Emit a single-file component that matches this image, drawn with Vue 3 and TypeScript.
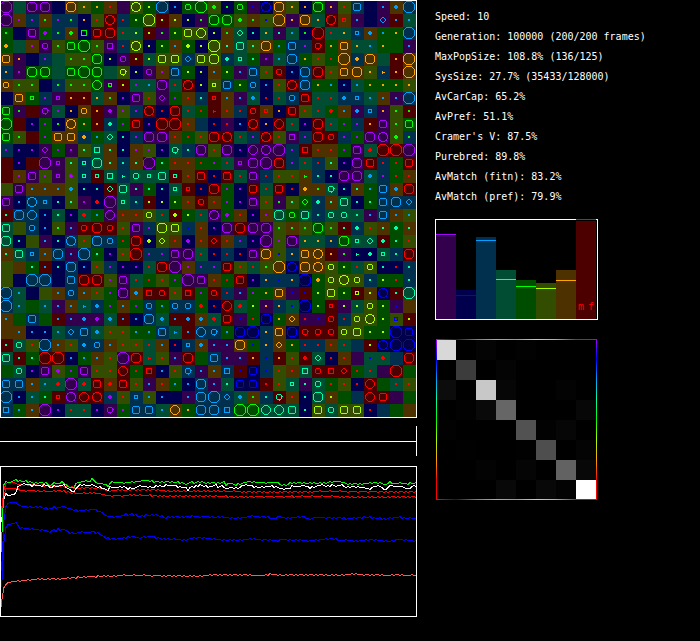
<script setup lang="ts">
type Point = [number, number]

interface Cell {
  x: number
  y: number
  fill: string
  stroke: string
  shape: string
}

const hues = ['#aa00ff', '#0000ff', '#00a0ff', '#00ffaa', '#00ff00', '#aaff00', '#ffa500', '#ff0000']
const shades = ['#33004d', '#00004d', '#00304d', '#004d33', '#004d00', '#334d00', '#4d3200', '#4d0000']

// One entry per cell: background index, marker index, marker shape.
const world = [
  '00O 3-- 00C 00C 1-- 66C 56. 46. 67. 0-- 55G 45. 22O 12. 44c 44O 54a 14. 44c 01. 11G 66C 56. 16. 44C 06. 57. 22m 1-- 02. 62a 22O',
  '00O 60. 20. 64. 20. 24. 16. 57. 77G 27. 45. 55O 75. 65. 15. 04. 44C 44C 54a 64. 51. 66O 06. 66C 36. 77G 67s 02. 1-- 02d 72. 32.',
  '44. 1-- 00m 40a 24. 64a 14q 77m 77C 37. 35. 75. 04. 45. 55m 55D 15. 64. 33d 13. 36. 03. 32. 14. 77O 37. 36. 22s 62a 42. 46. 22O',
  '46a 3-- 60. 00c 54. 44m 44O 54. 00q 27. 55G 15. 45. 62. 45a 15. 55O 63. 33m 53. 66C 42. 22m 20. 77g 46. 66m 36. 32. 46. 4-- 02.',
  '66m 06. 1-- 20. 3-- 54. 54. 44C 15. 00c 75. 35. 55m 55m 22d 55m 55C 23a 33s 43. 00. 32. 22C 46. 57. 47. 66O 26a 66C 3-- 76. 66O',
  '26. 00. 44C 44C 3-- 44m 44O 44C 3-- 55g 15. 00c 60. 22m 45. 15. 62. 45. 02. 22m 57. 77c 12. 22C 77C 57. 66m 66C 56. 26+ 76. 66O',
  '66c 54. 54. 1-- 24. 54. 54. 44D 04s 75. 30. 32. 00C 37. 77G 15. 55s 22m 45. 22c 12. 57. 77G 22C 46. 42. 12. 32. 46. 46. 46. 56.',
  '1-- 66m 44s 20. 00s 76. 76. 36. 64. 10. 00m 57. 00d 40. 67. 23. 77s 62. 02. 32a 17. 37. 22c 77m 37. 37. 22a 22s 32. 62. 02. 22O',
  '44m 04. 7-- 00g 30. 16. 66c 76. 00a 50. 20. 77G 17. 77C 37. 47. 77+ 67. 27. 77c 67s 16. 77m 57. 37. 47a 62. 02a 22s 06. 54. 74.',
  '44O 7-- 10. 40. 14. 66G 46. 76. 23a 40. 77m 10. 77O 77O 67. 2-- 17. 07. 12. 77G 16. 77D 37. 10. 77C 37. 40. 20. 76. 00m 54. 44m',
  '44m 54. 7-- 40. 66m 66m 26a 42. 33d 13. 20. 00C 00C 67. 47. 57. 77C 77G 37. 20. 77G 57. 00q 20. 77C 77c 20. 40. 00C 00G 54a 24.',
  '20. 10. 10. 00d 40. 00. 53. 33q 63. 13. 60. 50. 10. 33g 23. 00C 57. 00C 10. 00D 00G 00O 20. 77q 67. 67. 40. 00m 37a 77O 77O 00O',
  '7-- 10. 7-- 00O 00s 53. 23s 33C 63. 23. 63. 00O 43. 67. 67. 47. 40. 37. 00s 00C 00O 77C 20. 37. 27. 53. 10. 00C 77m 27. 47. 77m',
  '7-- 60. 00m 50. 00s 50a 23s 73s 33q 23+ 33c 33s 33m 73s 67. 77m 17. 77m 37. 00m 27. 57. 57. 64+ 23. 13. 00C 00C 32a 20. 47. 67.',
  '5-- 00m 62. 62. 62. 52a 13. 13. 73d 33m 03. 43. 13. 33s 77s 17. 77C 40. 10. 77m 37. 77m 17. 66a 64. 33g 13. 63. 42. 22m 62a 77C',
  '00m 12. 22G 22s 13. 53. 00. 17a 00O 33s 23. 75. 15. 45. 67. 77c 67. 40. 10. 00m 57. 04. 53. 44d 23a 63. 33m 13. 43. 22m 22C 22d',
  '73. 22C 22D 12. 33. 10. 37a 42. 00D 67. 67. 55c 37. 75a 45. 37. 00G 40a 67. 10. 60. 33C 44c 33m 23. 33c 33c 33. 02. 22m 62. 52.',
  '33m 5-- 22c 12. 54. 02. 77c 77C 77c 57. 00m 20. 55C 55m 21. 67. 10. 00C 77C 00C 00C 54. 64. 54. 44C 54. 73. 23a 57. 63. 43a 63.',
  '33C 13. 5-- 02. 13. 22G 57. 22C 22c 47. 77C 15a 55d 67. 10a 67. 77d 67. 20. 10. 00O 50. 00C 36. 36. 26. 44C 33s 33d 73a 43. 57.',
  '63. 33m 22s 62. 22C 02. 22O 43. 10. 57. 77O 20. 20. 00m 00C 37. 17. 27. 17. 00m 66C 51. 26. 66m 66G 76. 04. 13+ 13a 33s 23. 77C',
  '5-- 6-- 43. 72. 13. 22C 12. 57. 20. 10. 10. 37. 77C 00O 60. 20. 20. 77m 57. 37. 54. 66O 11G 66C 66G 55c 45. 37. 55c 13. 17. 23.',
  '5-- 1-- 22O 22O 1-- 22m 77C 77C 50. 00m 37. 47. 57. 40. 00O 00m 67. 47. 77m 10. 26. 21. 26. 11O 46a 55c 55G 55c 23. 45. 47. 23.',
  '22O 32. 1-- 5-- 62. 22c 62. 57. 40. 00C 62a 77q 77c 57. 77q 40. 77c 27. 02. 40. 46. 66m 01. 71. 45. 55m 45. 75s 65. 11G 73. 33O',
  '22O 32. 4-- 32. 02. 62. 32+ 22a 40. 62. 40. 22c 42. 22c 22c 47a 17. 77D 37a 45. 06. 26. 31. 11O 45. 77s 05. 35. 55c 45. 01. 6--',
  '62. 4-- 22m 4-- 72. 02. 02a 00a 32a 72. 12. 22C 32a 72. 72a 62a 37a 77m 01. 47. 11C 46. 66d 07. 01. 77c 27. 55c 55G 45. 51s 75.',
  '6-- 62. 12. 12. 32. 22d 22m 32a 57. 57. 42. 42. 22m 32+ 72. 22D 22g 42. 11C 11O 26. 66m 11C 77g 77c 77c 55c 55m 45. 45. 11O 11m',
  '73. 33c 57. 22O 62. 57. 22a 22c 62. 57. 57. 37. 62. 17. 22s 62a 02. 02. 66C 41. 26. 66d 46. 27. 27. 67. 37. 2-- 75. 11G 11O 11O',
  '33m 73. 43. 77O 77O 12. 42. 62. 57. 00O 77C 37+ 57. 02. 77C 4-- 22m 02. 02. 76. 21. 76. 57. 77a 33d 17. 67. 0-- 31. 37a 2-- 77C',
  '4-- 33c 10. 00m 50a 40. 00m 57. 57. 77D 47. 77q 12. 57. 22g 02. 62. 22q 71. 11m 21. 57. 67. 33q 77c 77q 77d 47. 37. 0-- 77O 4--',
  '22m 22m 62. 32. 37a 00O 37a 77m 67a 77m 57. 02. 67. 42. 12. 22C 02. 33. 11m 11m 77. 57. 33s 03. 33c 47. 57. 17. 77D 4-- 37. 57.',
  '22O 12. 32. 43. 77s 00G 77D 77G 20a 57. 22s 52. 12. 1-- 02. 22C 22O 22d 32a 64. 23. 73g 67. 13. 33C 65. 4-- 2-- 77D 77m 0-- 4--',
  '22q 42. 62. 00O 10. 37. 37. 10. 00g 40. 22m 22m 32. 66D 46. 22C 22C 22q 44O 44O 33D 33D 33m 13. 55m 33c 55m 55m 17. 2-- 4-- 6--',
]

const cells: Cell[] = world.flatMap((line, row) =>
  line.split(' ').map((code, col) => ({
    x: col * 13,
    y: row * 13 + 1,
    fill: shades[Number(code[0])],
    stroke: code[1] === '-' ? 'none' : hues[Number(code[1])],
    shape: code[2],
  })),
)

// Marker outlines, drawn round the cell's centre point.
const markers: Record<string, string> = {
  '.': 'M-.5 -.5H.5V.5H-.5Z',
  a: 'M-.5 -1.5H.5V-.5H1.5V.5H.5V1.5H-.5V.5H-1.5V-.5H-.5Z',
  '+': 'M-.5 -1.5V1.5M-1.5 .5H1.5',
  s: 'M-1.5 -1.5H1.5V1.5H-1.5Z',
  q: 'M-2.5 -2.5H2.5V2.5H-2.5Z',
  c: 'M-1.5 -2.5H1.5L2.5 -1.5V1.5L1.5 2.5H-1.5L-2.5 1.5V-1.5Z',
  d: 'M-.5 -2.5H.5L2.5 -.5V.5L.5 2.5H-.5L-2.5 .5V-.5Z',
  g: 'M-1.5 -2.5H1.5L2.5 -1.5V1.5L1.5 2.5H-1.5L-2.5 1.5V-1.5ZM-.5 -3.5V-2.5M.5 3.5V2.5M-3.5 .5H-2.5M3.5 -.5H2.5',
  m: 'M-2.5 -3.5H2.5L3.5 -2.5V2.5L2.5 3.5H-2.5L-3.5 2.5V-2.5Z',
  C: 'M-2.5 -4.5H2.5L4.5 -2.5V2.5L2.5 4.5H-2.5L-4.5 2.5V-2.5Z',
  D: 'M-1.5 -4.5H1.5L4.5 -1.5V1.5L1.5 4.5H-1.5L-4.5 1.5V-1.5Z',
  G: 'M-1.5 -4.5H1.5L2.5 -3.5H3.5V-2.5L4.5 -1.5V1.5L3.5 2.5V3.5H2.5L1.5 4.5H-1.5L-2.5 3.5H-3.5V2.5L-4.5 1.5V-1.5L-3.5 -2.5V-3.5H-2.5Z',
  O: 'M-2.5 -5.5H2.5L5.5 -2.5V2.5L2.5 5.5H-2.5L-5.5 2.5V-2.5Z',
}

const stats = [
  'Speed: 10',
  'Generation: 100000 (200/200 frames)',
  'MaxPopSize: 108.8% (136/125)',
  'SysSize: 27.7% (35433/128000)',
  'AvCarCap: 65.2%',
  'AvPref: 51.1%',
  "Cramer's V: 87.5%",
  'Purebred: 89.8%',
  'AvMatch (fitn): 83.2%',
  'AvMatch (pref): 79.9%',
]

const bars = [
  { top: 17, mark: 15 },
  { top: 71, mark: 76 },
  { top: 18, mark: 21 },
  { top: 51, mark: 60 },
  { top: 61, mark: 67 },
  { top: 64, mark: 69 },
  { top: 51, mark: 61 },
  { top: 2, mark: 0 },
]

const matrix = [
  [216, 0, 4, 0, 2, 0, 0, 0],
  [0, 60, 0, 4, 0, 0, 0, 0],
  [12, 0, 200, 6, 0, 0, 3, 0],
  [0, 2, 9, 102, 0, 0, 0, 7],
  [2, 0, 0, 0, 82, 2, 6, 0],
  [0, 1, 0, 0, 1, 78, 0, 4],
  [0, 0, 3, 0, 5, 0, 98, 8],
  [0, 0, 0, 8, 0, 8, 3, 255],
]

// Each pair is x, y in thirds of a chart unit.
const series = [
  { color: '#ff0000', path: '4,155 8,90 14,60 20,49 45,51 60,56 75,57 100,57 150,60 180,60 215,62 225,68 250,65 300,66 325,75 360,73 400,72 440,71 490,73 500,76 580,75 620,75 740,77 820,78 1000,76 1100,77 1248,77' },
  { color: '#ff0000', path: '4,170 10,95 18,67 50,68 60,73 100,74 150,77 175,73 210,79 225,82 290,81 325,90 400,88 480,89 500,91 600,90 700,92 1000,91 1020,93 1248,93' },
  { color: '#0000ff', path: '5,315 9,200 14,140 20,112 28,110 50,110 60,120 75,123 120,124 152,129 163,121 170,130 176,121 182,127 188,118 200,126 230,134 245,135 265,131 285,130 300,137 320,150 345,152 370,149 378,144 385,148 395,144 415,150 460,146 490,151 497,158 505,152 560,153 580,151 640,153 680,154 695,157 745,153 752,150 790,153 800,153 820,160 840,152 860,157 910,152 930,160 945,154 1020,156 1040,158 1070,155 1110,154 1160,159 1192,152 1210,156 1248,158' },
  { color: '#0000ff', path: '5,365 10,250 14,200 20,177 50,170 58,185 85,188 125,192 152,198 163,190 170,197 176,185 182,195 190,188 205,198 225,204 240,198 265,200 275,196 300,204 320,217 345,220 375,215 400,211 415,217 430,213 460,212 480,218 560,222 572,216 600,215 650,220 690,223 750,219 800,222 830,225 845,220 900,223 930,225 1000,218 1020,223 1070,224 1120,221 1150,225 1180,225 1192,219 1248,226' },
  { color: '#ffffff', path: '5,165 10,110 14,85 20,82 26,91 35,85 45,86 50,75 55,59 75,53 90,57 95,62 105,57 125,61 130,56 145,60 152,66 165,60 175,63 188,55 200,65 210,72 222,79 230,61 245,56 270,59 275,52 285,61 300,63 310,67 325,74 332,60 340,65 375,62 385,69 395,65 405,69 415,60 440,63 460,65 470,59 490,62 500,57 512,61 520,58 535,63 555,64 566,72 573,59 580,63 600,57 620,62 635,62 645,56 655,63 670,60 678,68 700,64 715,67 728,58 755,58 765,64 800,61 820,61 845,68 868,69 875,59 890,63 910,58 930,66 965,57 985,61 997,57 1005,60 1025,57 1040,64 1075,62 1090,65 1110,69 1125,61 1140,61 1155,73 1165,64 1172,55 1180,61 1205,62 1225,69 1235,62 1248,60' },
  { color: '#00ff00', path: '5,260 8,80 14,45 20,45 25,50 50,40 57,46 75,45 90,48 100,53 120,51 140,50 152,60 163,46 170,58 175,48 182,55 188,45 195,57 205,62 220,68 230,50 250,46 270,46 273,37 280,40 290,52 315,53 325,62 332,49 375,50 405,49 430,43 460,47 530,48 565,55 572,45 580,52 595,47 625,51 665,50 672,47 678,56 695,51 705,57 720,54 730,50 750,47 765,49 800,51 830,49 843,56 865,57 870,50 900,51 950,52 975,51 1000,47 1025,48 1040,54 1080,53 1145,50 1155,57 1170,48 1180,52 1215,53 1248,51' },
  { color: '#ff5555', path: '4,423 8,375 14,358 20,352 35,348 60,344 95,342 110,338 130,340 180,338 220,336 260,332 320,331 380,328 500,329 560,330 600,330 640,327 740,327 790,329 810,325 850,327 950,326 1000,328 1060,325 1140,327 1160,328 1190,325 1210,328 1248,328' },
]

// Resamples a curve every two units and adds the sampling ripple.
function trace(path: string, seed: number): string {
  const pts = path.split(' ').map((pair): Point => {
    const [x, y] = pair.split(',').map(Number)
    return [x / 3, y / 3]
  })
  const out: string[] = []
  let k = 0
  for (let x = 2; x <= 416; x += 2) {
    while (k < pts.length - 2 && pts[k + 1][0] < x) k++
    const [ax, ay] = pts[k]
    const [bx, by] = pts[k + 1]
    const t = Math.min(1, Math.max(0, (x - ax) / (bx - ax)))
    const ripple = x > 16 ? Math.sin(x * 1.9 + seed * 2.3) * 0.55 : 0
    out.push(`${x},${Math.floor(ay + (by - ay) * t + ripple) + 0.5}`)
  }
  return `${Math.floor(pts[0][0])},${Math.floor(pts[0][1]) + 0.5} ${out.join(' ')}`
}

const traces = series.map((s, i) => ({ color: s.color, points: trace(s.path, i) }))
</script>

<template>
  <main class="screen">
    <section class="left">
      <svg class="plot" viewBox="0 0 417 418" role="img" aria-label="World">
        <g v-for="(cell, i) in cells" :key="i" :transform="`translate(${cell.x} ${cell.y})`">
          <rect width="13" height="13" :fill="cell.fill" />
          <path
            v-if="markers[cell.shape]"
            :d="markers[cell.shape]"
            :stroke="cell.stroke"
            fill="none"
            transform="translate(6 6)"
          />
        </g>
        <rect class="frame" x=".5" y=".5" width="416" height="417" />
      </svg>
      <svg class="plot strip" viewBox="0 0 417 30" role="img" aria-label="Selection">
        <path class="frame" d="M0 15.5H416M416.5 0V30" />
      </svg>
      <svg class="plot" viewBox="0 0 417 151" role="img" aria-label="History">
        <rect class="frame" x=".5" y=".5" width="416" height="150" />
        <polyline v-for="(t, i) in traces" :key="i" :points="t.points" :stroke="t.color" fill="none" />
      </svg>
    </section>

    <section class="right">
      <ul class="stats">
        <li v-for="line in stats" :key="line">{{ line }}</li>
      </ul>
      <svg class="plot bars" viewBox="0 0 163 101" role="img" aria-label="Populations">
        <rect class="frame" x=".5" y=".5" width="162" height="100" />
        <g v-for="(bar, i) in bars" :key="i">
          <rect :x="1 + i * 20" :y="bar.top" width="20" :height="100 - bar.top" :fill="shades[i]" />
          <rect :x="1 + i * 20" :y="bar.mark" width="20" height="1" :fill="hues[i]" />
        </g>
        <text x="143" y="91">m</text>
        <text x="153" y="91">f</text>
      </svg>
      <svg class="plot matrix" viewBox="0 0 163 161" role="img" aria-label="Preference matrix">
        <defs>
          <linearGradient id="across" gradientUnits="userSpaceOnUse" x1="1" y1="0" x2="141" y2="0">
            <stop v-for="(hue, i) in hues" :key="hue" :offset="i / 7" :stop-color="hue" />
          </linearGradient>
          <linearGradient id="down" gradientUnits="userSpaceOnUse" x1="0" y1="0" x2="0" y2="141">
            <stop v-for="(hue, i) in hues" :key="hue" :offset="i / 7" :stop-color="hue" />
          </linearGradient>
        </defs>
        <template v-for="(row, r) in matrix" :key="r">
          <rect
            v-for="(v, c) in row"
            :key="c"
            :x="1 + c * 20"
            :y="1 + r * 20"
            width="20"
            height="20"
            :fill="`rgb(${v}, ${v}, ${v})`"
          />
        </template>
        <rect x="1" y="0" width="161" height="1" fill="url(#across)" />
        <rect x="1" y="160" width="161" height="1" fill="url(#across)" />
        <rect x="1" y="0" width="1" height="161" fill="url(#down)" />
        <rect x="161" y="0" width="1" height="161" fill="url(#down)" />
      </svg>
    </section>
  </main>
</template>

<style>
body {
  background: #000;
}
</style>

<style scoped>
.screen {
  display: grid;
  grid-template-columns: 417fr 283fr;
  min-height: 100vh;
  background: #000;
  color: #fff;
  font: 10px/20px 'DejaVu Sans Mono', 'Liberation Mono', monospace;
}
.left {
  display: flex;
  flex-direction: column;
}
.right {
  display: flex;
  flex-direction: column;
  padding: 7px 0 0 18px;
}
.plot {
  display: block;
  width: 100%;
  shape-rendering: crispEdges;
}
.strip {
  margin: 8px 0 10px;
}
.bars,
.matrix {
  width: 163px;
}
.matrix {
  margin-top: 19px;
}
.frame {
  fill: none;
  stroke: #fff;
}
.stats {
  list-style: none;
  margin: 0 0 12px;
  padding: 0;
  white-space: nowrap;
}
text {
  fill: #f00;
}
</style>
